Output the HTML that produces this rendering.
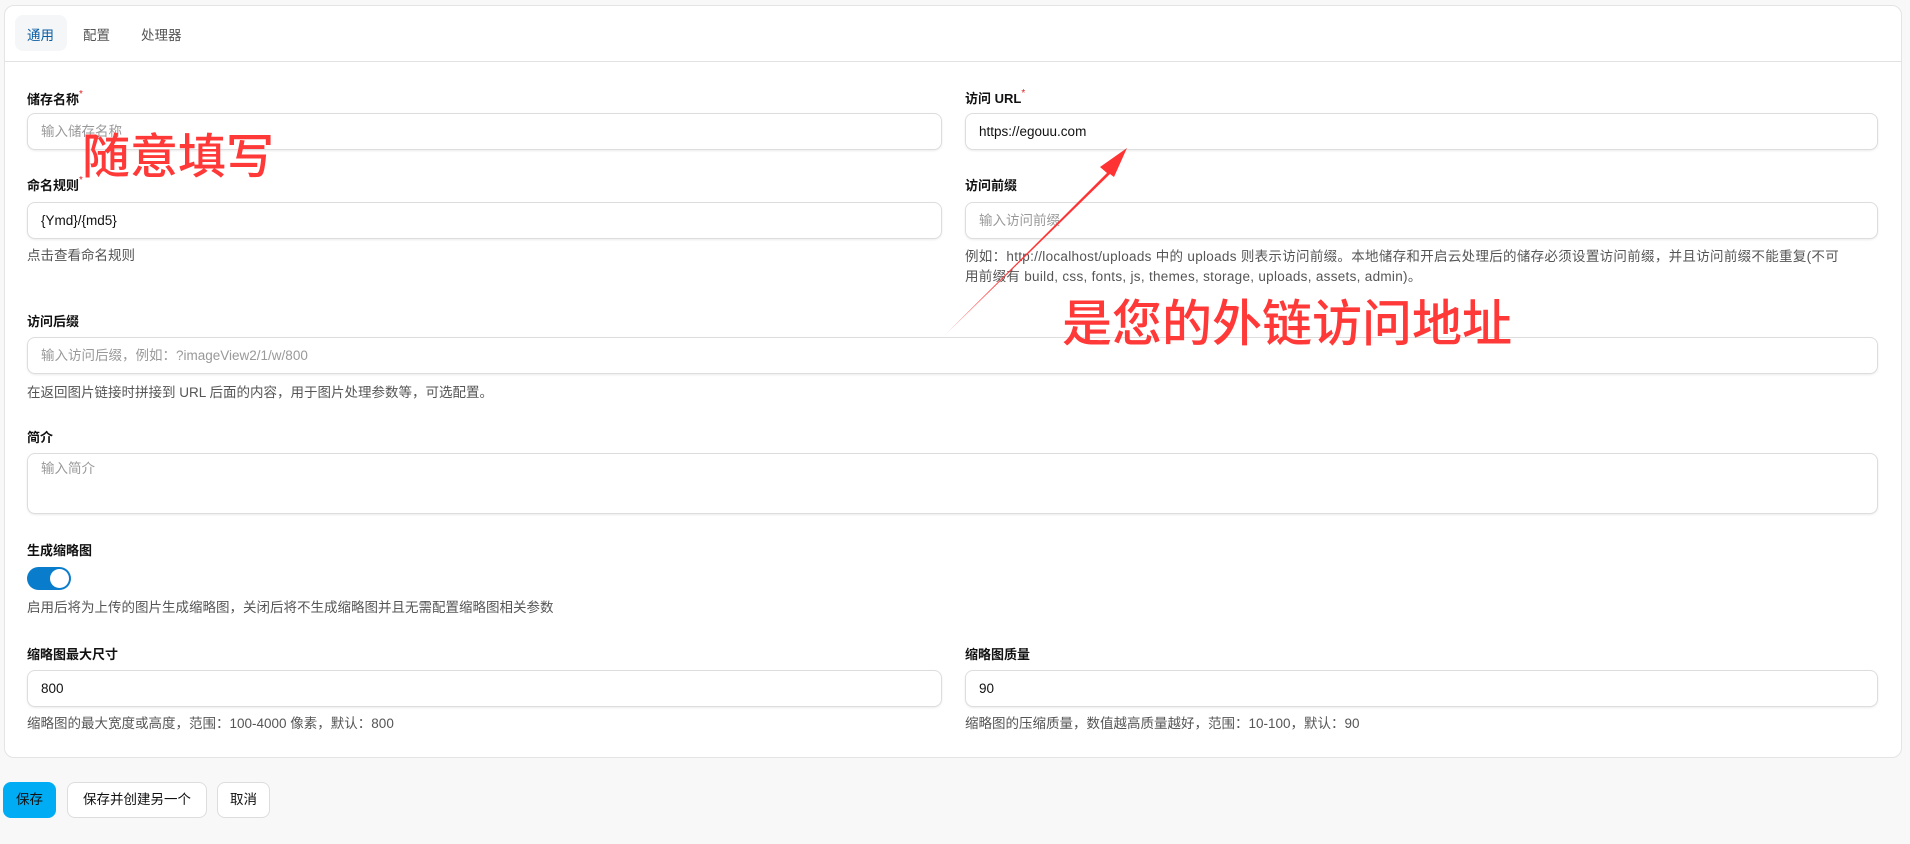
<!DOCTYPE html>
<html><head><meta charset="utf-8"><style>
*{box-sizing:border-box;margin:0;padding:0}
body{width:1910px;height:844px;background:#f8f8f8;font-family:"Liberation Sans","Noto Sans CJK SC",sans-serif;color:#111;position:relative;overflow:hidden;font-size:14px}
.card{position:absolute;left:4px;top:5px;width:1898px;height:753px;background:#fff;border:1px solid #e4e4e4;border-radius:10px}
.a{position:absolute}
.tabact{left:15px;top:15px;width:52px;height:36px;background:#f5f6f7;border-radius:8px}
.tab{top:24px;font-size:13.5px;color:#555}
.div{left:5px;top:61px;width:1897px;height:1px;background:#e2e2e2}
.lbl{font-size:13px;font-weight:bold;color:#111}
.lbl .r{color:#e02424;font-size:10px;vertical-align:top;font-weight:normal}
.in{border:1px solid #ddd;border-radius:8px;box-shadow:0 1px 2px rgba(0,0,0,.08);height:37px;padding:0 13px;line-height:35px;font-size:13.5px;color:#111;background:#fff}
.ph{color:#999}
.help{font-size:13.5px;color:#555;line-height:20px;white-space:nowrap}
.red{color:#ff3838;font-family:"Noto Sans CJK SC",sans-serif;white-space:nowrap;font-weight:500}
.btn{top:782px;height:36px;border:1px solid #ddd;border-radius:8px;background:#fff;line-height:34px;text-align:center;font-size:13.5px;color:#111}
</style></head><body>
<div class="card"></div>
<div class="a tabact"></div>
<div class="a tab" style="left:27px;color:#0b5fa5">通用</div>
<div class="a tab" style="left:83px">配置</div>
<div class="a tab" style="left:141px">处理器</div>
<div class="a div"></div>

<div class="a lbl" style="left:27px;top:89px">储存名称<span class="r">*</span></div>
<div class="a in" style="left:27px;top:113px;width:915px"><span class="ph">输入储存名称</span></div>
<div class="a lbl" style="left:27px;top:175px">命名规则<span class="r">*</span></div>
<div class="a in" style="left:27px;top:202px;width:915px">{Ymd}/{md5}</div>
<div class="a help" style="left:27px;top:246px">点击查看命名规则</div>

<div class="a lbl" style="left:965px;top:88px">访问 URL<span class="r">*</span></div>
<div class="a in" style="left:965px;top:113px;width:913px">https://egouu.com</div>
<div class="a lbl" style="left:965px;top:175px">访问前缀</div>
<div class="a in" style="left:965px;top:202px;width:913px"><span class="ph">输入访问前缀</span></div>
<div class="a help" style="left:965px;top:247px;letter-spacing:0.3px">例如：http://localhost/uploads 中的 uploads 则表示访问前缀。本地储存和开启云处理后的储存必须设置访问前缀，并且访问前缀不能重复(不可<br>用前缀有 build, css, fonts, js, themes, storage, uploads, assets, admin)。</div>

<div class="a lbl" style="left:27px;top:311px">访问后缀</div>
<div class="a in" style="left:27px;top:337px;width:1851px"><span class="ph">输入访问后缀，例如：?imageView2/1/w/800</span></div>
<div class="a help" style="left:27px;top:383px">在返回图片链接时拼接到 URL 后面的内容，用于图片处理参数等，可选配置。</div>

<div class="a lbl" style="left:27px;top:427px">简介</div>
<div class="a in" style="left:27px;top:453px;width:1851px;height:61px;line-height:30px"><span class="ph">输入简介</span></div>

<div class="a lbl" style="left:27px;top:540px">生成缩略图</div>
<div class="a" style="left:27px;top:567px;width:44px;height:23px;background:#0a7ccc;border-radius:12px"><div style="position:absolute;right:2px;top:2px;width:19px;height:19px;border-radius:50%;background:#fff"></div></div>
<div class="a help" style="left:27px;top:598px">启用后将为上传的图片生成缩略图，关闭后将不生成缩略图并且无需配置缩略图相关参数</div>

<div class="a lbl" style="left:27px;top:644px">缩略图最大尺寸</div>
<div class="a in" style="left:27px;top:670px;width:915px">800</div>
<div class="a help" style="left:27px;top:714px">缩略图的最大宽度或高度，范围：100-4000 像素，默认：800</div>
<div class="a lbl" style="left:965px;top:644px">缩略图质量</div>
<div class="a in" style="left:965px;top:670px;width:913px">90</div>
<div class="a help" style="left:965px;top:714px">缩略图的压缩质量，数值越高质量越好，范围：10-100，默认：90</div>

<div class="a btn" style="left:3px;width:53px;background:#00adf5;border-color:#00adf5">保存</div>
<div class="a btn" style="left:67px;width:140px">保存并创建另一个</div>
<div class="a btn" style="left:217px;width:53px">取消</div>

<div class="a red" style="left:82px;top:122px;font-size:48px;line-height:60px">随意填写</div>
<div class="a red" style="left:1062px;top:288px;font-size:50px;line-height:64px">是您的外链访问地址</div>
<svg class="a" style="left:0;top:0" width="1910" height="844">
<polygon points="947,333 1107,173 1100,167 1127,148 1114,177 1110,174" fill="#ff3333"/>
</svg>
</body></html>
